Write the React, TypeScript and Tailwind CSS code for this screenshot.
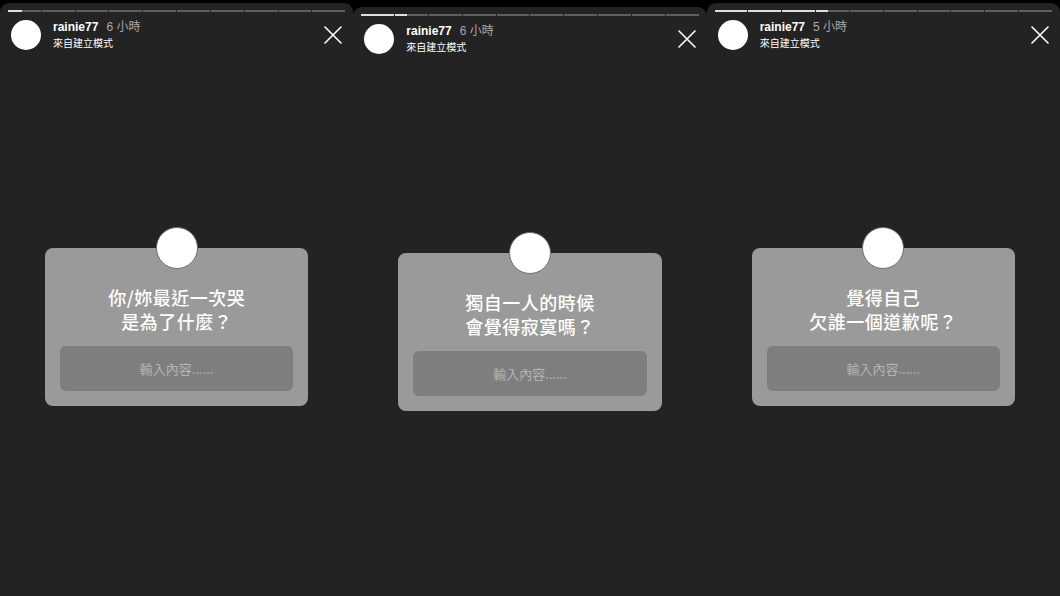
import React from 'react';

type Story = {
    time: string;
    full: number;
    partial: number;
    lines: string[];
    offset: string;
    cardTop: string;
};

const stories: Story[] = [
    { time: '6 小時', full: 0, partial: 42, lines: ['你/妳最近一次哭', '是為了什麼？'], offset: 'mt-[3px]', cardTop: 'mt-[198px]' },
    { time: '6 小時', full: 1, partial: 36, lines: ['獨自一人的時候', '會覺得寂寞嗎？'], offset: 'mt-[7px]', cardTop: 'mt-[199px]' },
    { time: '5 小時', full: 3, partial: 36, lines: ['覺得自己', '欠誰一個道歉呢？'], offset: 'mt-[3px]', cardTop: 'mt-[198px]' },
];

const font = { fontFamily: '"Liberation Sans", "Noto Sans CJK TC", sans-serif' };
const cjk = { fontFamily: '"Noto Sans CJK TC", "Noto Sans", sans-serif' };

const Progress: React.FC<{ full: number; partial: number }> = ({ full, partial }) => (
    <div className="flex gap-[1px] h-[2px]">
        {Array.from({ length: 10 }).map((_, i) => (
            <div key={i} className="flex-1 bg-[#5e5e5e] overflow-hidden">
                {i < full && <div className="h-full w-full bg-[#dedede]" />}
                {i === full && <div className="h-full bg-[#dedede]" style={{ width: `${partial}%` }} />}
            </div>
        ))}
    </div>
);

const Panel: React.FC<{ s: Story }> = ({ s }) => (
    <div className={`flex-1 ${s.offset} rounded-t-[9px] bg-[#232323] pt-[7px] px-2`} style={font}>
        <Progress full={s.full} partial={s.partial} />

        {/* header */}
        <div className="flex items-center mt-2 pl-[3px]">
            <div className="w-[30px] h-[30px] rounded-full bg-white" />
            <div className="ml-3 flex flex-col">
                <div className="flex items-center gap-2 text-[12px] leading-[15px]">
                    <span className="font-bold text-white">rainie77</span>
                    <span className="text-[#a9a9a9]">{s.time}</span>
                </div>
                <span className="text-[10px] leading-[14px] mt-[1px] text-white" style={cjk}>來自建立模式</span>
            </div>
            <svg className="ml-auto mr-[3px]" width="18" height="18" viewBox="0 0 18 18">
                <path d="M1 1 L17 17 M17 1 L1 17" stroke="white" strokeWidth="1.6" strokeLinecap="round" />
            </svg>
        </div>

        {/* question card */}
        <div className={`relative ${s.cardTop} mx-[37px] rounded-[8px] bg-[#9a9a9a] pt-[37px] px-[15px] pb-[15px]`}>
            <div className="absolute left-1/2 -translate-x-1/2 -top-[21px] w-[42px] h-[42px] rounded-full bg-white border-[1.5px] border-[#6e6e6e]" />
            <div className="text-center text-white text-[18px] leading-[24px] font-medium tracking-[0.5px]" style={cjk}>
                {s.lines.map(l => (
                    <div key={l}>{l}</div>
                ))}
            </div>
            <div className="mt-[13px] h-[45px] rounded-[6px] bg-[#7e7e7e] flex items-center justify-center text-[13px] text-[#b4b4b4]" style={cjk}>
                輸入內容......
            </div>
        </div>
    </div>
);

export default function App() {
    return (
        <div className="w-[1060px] h-[596px] bg-black flex overflow-hidden">
            {stories.map((s, i) => (
                <Panel key={i} s={s} />
            ))}
        </div>
    );
}
